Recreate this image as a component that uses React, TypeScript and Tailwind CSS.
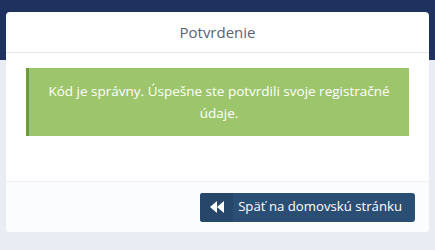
import React from "react";

export default function App() {
  return (
    <div
      className="relative h-[250px] w-[435px] overflow-hidden bg-[#e9edf3]"
      style={{ fontFamily: '"Open Sans", sans-serif' }}
    >
      <div className="absolute left-0 top-0 h-[60px] w-full bg-[#1f315e]" />
      <div className="relative mx-[6px] mt-[12px] flex w-[423px] flex-col overflow-hidden rounded-[4px] bg-white">
        <div className="flex h-[41px] items-center justify-center border-b border-[#e6e8ec] text-[15px] text-[#5b6274]">
          Potvrdenie
        </div>
        <div className="h-[128px] px-[20px] pt-[15px]">
          <div className="flex h-[68px] flex-col items-center justify-center border-l-[3px] border-[#6d9a3c] bg-[#9dc56b] px-[16px] text-center text-[13.5px] leading-[22px] text-white">
            <div>Kód je správny. Úspešne ste potvrdili svoje registračné</div>
            <div>údaje.</div>
          </div>
        </div>
        <div className="flex h-[51px] items-center justify-end border-t border-[#eef0f3] bg-[#fbfcfd] pr-[14px]">
          <button className="flex h-[29px] items-stretch overflow-hidden rounded-[3px] bg-[#2b4e74] text-[13px] text-white">
            <span className="flex w-[33px] items-center justify-center bg-[#264769]">
              <svg width="14" height="12" viewBox="0 0 14 12">
                <polygon points="7,0 7,12 0,6" fill="white" />
                <polygon points="14,0 14,12 7,6" fill="white" />
              </svg>
            </span>
            <span className="flex items-center pl-[5px] pr-[13px] text-[13.2px]">Späť na domovskú stránku</span>
          </button>
        </div>
      </div>
    </div>
  );
}
